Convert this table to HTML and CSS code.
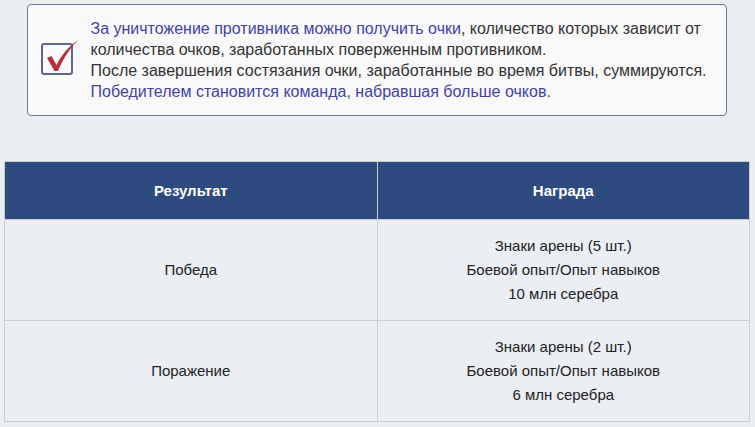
FILE: index.html
```html
<!DOCTYPE html>
<html lang="ru">
<head>
<meta charset="utf-8">
<link rel="stylesheet" href="styles.css">
</head>
<body>
<div class="page">
  <div class="notice">
    <div class="notice-icon">
      <svg width="44" height="44" viewBox="0 0 44 44">
        <rect x="4" y="9" width="30" height="30" rx="2" fill="none" stroke="#5e6787" stroke-width="2"/>
        <path d="M9 23 L13.5 21 L18.5 30 C23.5 20 31 11 40 5 C32 13 25 24 20 36 L16.5 36 Z" fill="#b5303a"/>
      </svg>
    </div>
    <div class="notice-text">
      <span class="hl">За уничтожение противника можно получить очки</span>, количество которых зависит от<br>
      количества очков, заработанных поверженным противником.<br>
      После завершения состязания очки, заработанные во время битвы, суммируются.<br>
      <span class="hl">Победителем становится команда, набравшая больше очков.</span>
    </div>
  </div>

  <table class="rewards">
    <thead>
      <tr><th>Результат</th><th>Награда</th></tr>
    </thead>
    <tbody>
      <tr>
        <td>Победа</td>
        <td>Знаки арены (5 шт.)<br>Боевой опыт/Опыт навыков<br>10 млн серебра</td>
      </tr>
      <tr>
        <td>Поражение</td>
        <td>Знаки арены (2 шт.)<br>Боевой опыт/Опыт навыков<br>6 млн серебра</td>
      </tr>
    </tbody>
  </table>
</div>
</body>
</html>
```

FILE: styles.css
```css
html, body {
  margin: 0;
  padding: 0;
  background: #ebeff4;
}
body {
  font-family: "Liberation Sans", Arial, sans-serif;
  color: #333;
}
.page {
  padding: 4px 6px 4px 4px;
}
.notice {
  width: 700px;
  box-sizing: border-box;
  height: 112px;
  margin: 0 auto;
  border: 1px solid #6f7896;
  border-radius: 4px;
  background: #f9f9fa;
  display: flex;
  align-items: center;
}
.notice-icon {
  width: 63px;
  box-sizing: border-box;
  flex: none;
  display: flex;
  justify-content: flex-start;
  padding-left: 10px;
  margin-top: -6px;
}
.notice-icon svg {
  display: block;
}
.notice-text {
  font-size: 16px;
  line-height: 21px;
  color: #333;
  white-space: nowrap;
}
.hl {
  color: #4343a3;
}
.rewards {
  margin-top: 45px;
  width: 746px;
  border-collapse: collapse;
  table-layout: fixed;
  font-size: 15px;
}
.rewards th, .rewards td {
  border: 1px solid #cdcdcd;
  text-align: center;
  vertical-align: middle;
  padding: 0;
}
.rewards th {
  background: #2e4b80;
  color: #fff;
  font-weight: bold;
  font-size: 15px;
  height: 57px;
}
.rewards td {
  height: 100px;
  line-height: 24px;
  color: #222;
}
```
